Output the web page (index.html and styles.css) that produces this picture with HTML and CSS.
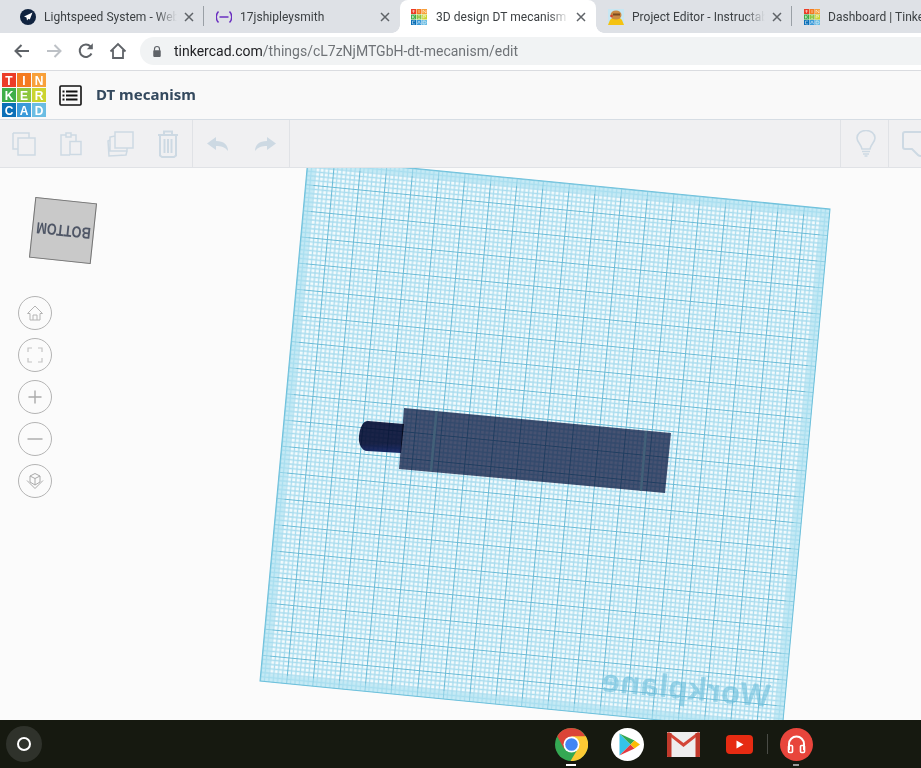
FILE: index.html
```html
<!DOCTYPE html>
<html lang="en">
<head>
<meta charset="utf-8">
<title>3D design DT mecanism</title>
<link rel="stylesheet" href="styles.css">
</head>
<body>
<svg class="defs" width="0" height="0">
  <defs>
    <symbol id="tc" viewBox="0 0 16 16">
      <rect x="0" y="0" width="5" height="5" fill="#ec3c28"/><rect x="5.500" y="0" width="5" height="5" fill="#f47a20"/><rect x="11" y="0" width="5" height="5" fill="#f8a03a"/>
      <rect x="0" y="5.500" width="5" height="5" fill="#3fae49"/><rect x="5.500" y="5.500" width="5" height="5" fill="#8dc63f"/><rect x="11" y="5.500" width="5" height="5" fill="#cbd42f"/>
      <rect x="0" y="11" width="5" height="5" fill="#0a6fb7"/><rect x="5.500" y="11" width="5" height="5" fill="#3a9ad9"/><rect x="11" y="11" width="5" height="5" fill="#6bbde3"/>
      <path d="M1 2H4M2.500 1V4M8 1V4M12 4V1L15 4V1M1.500 6.500V9.500M3.800 6.500L1.500 8L3.800 9.500M7 6.800H9M7 9.300H9M12 9.500V6.500H14.500V8H12M4 12H1.500V15H4M6.500 15L8 12L9.500 15M12 12V15H14L15 13.500L14 12Z" fill="none" stroke="#fff" stroke-width=".5"/>
    </symbol>
    <symbol id="close" viewBox="0 0 10 10"><path d="M1 1L9 9M9 1L1 9" stroke="#5f6368" stroke-width="1.500" fill="none"/></symbol>
    <pattern id="grid" patternUnits="userSpaceOnUse" width="10" height="10">
      <rect width="10" height="10" fill="#f4fbfd"/>
      <path d="M1.667 0V10M3.333 0V10M5 0V10M6.667 0V10M8.333 0V10M0 1.667H10M0 3.333H10M0 5H10M0 6.667H10M0 8.333H10" stroke="#a8dcee" stroke-width=".5" fill="none"/>
      <path d="M.2 0V10M0 .2H10" stroke="#68bad6" stroke-width=".4" fill="none"/>
    </pattern>
  </defs>
</svg>

<div class="tabstrip">
  <div class="tab sep">
    <svg class="fav" viewBox="0 0 16 16"><circle cx="8" cy="8" r="8" fill="#10233f"/><path d="M12.500 3.500L4 7.500L6.500 8.500L7 11.500L8.500 9.800L9.800 10.500Z" fill="#fff"/></svg>
    <span class="tab-title">Lightspeed System - Web</span>
    <svg class="tab-x"><use href="#close"/></svg>
  </div>
  <div class="tab">
    <svg class="fav" viewBox="0 0 16 16"><path d="M2.500 2.500C-.5 5.500-.5 10.500 2.500 13.500M13.500 2.500C16.500 5.500 16.500 10.500 13.500 13.500" fill="none" stroke="#6a2fc0" stroke-width="1.500"/><path d="M3.500 8H12.500" stroke="#6a2fc0" stroke-width="1.500"/></svg>
    <span class="tab-title">17jshipleysmith</span>
    <svg class="tab-x"><use href="#close"/></svg>
  </div>
  <div class="tab active">
    <svg class="fav"><use href="#tc"/></svg>
    <span class="tab-title">3D design DT mecanism</span>
    <svg class="tab-x"><use href="#close"/></svg>
  </div>
  <div class="tab sep">
    <svg class="fav" viewBox="0 0 16 16"><rect width="16" height="16" fill="#c7e6f2"/><path d="M0 16L2 11H14L16 16Z" fill="#f5c211"/><path d="M2 11C3 14 13 14 14 11L12 9H4Z" fill="#f5c211"/><ellipse cx="8" cy="6" rx="5.500" ry="4.500" fill="#c98a45"/><rect x="5" y="4.500" width="7" height="2" fill="#7a4a20"/><circle cx="3.500" cy="7" r="1.300" fill="#d04030"/></svg>
    <span class="tab-title">Project Editor - Instructables</span>
    <svg class="tab-x"><use href="#close"/></svg>
  </div>
  <div class="tab">
    <svg class="fav"><use href="#tc"/></svg>
    <span class="tab-title tab-title-last">Dashboard | Tinkercad</span>
  </div>
</div>

<div class="navbar">
  <svg class="nav-ic" viewBox="0 0 20 20"><path d="M17 10H4M9.500 4L3.500 10L9.500 16" fill="none" stroke="#5f6368" stroke-width="2"/></svg>
  <svg class="nav-ic" viewBox="0 0 20 20"><path d="M3 10H16M10.500 4L16.500 10L10.500 16" fill="none" stroke="#bdc1c6" stroke-width="2"/></svg>
  <svg class="nav-ic" viewBox="0 0 20 20"><path d="M15.500 12.500A6.200 6.200 0 1 1 14.500 5.500" fill="none" stroke="#5f6368" stroke-width="2"/><path d="M10.800 8.300H16.800V2.300Z" fill="#5f6368"/></svg>
  <svg class="nav-ic" viewBox="0 0 20 20"><path d="M2.500 10.500L10 3L17.500 10.500M5 9V17H15V9" fill="none" stroke="#5f6368" stroke-width="1.800"/></svg>
  <div class="omnibox">
    <svg class="lock" viewBox="0 0 12 14"><path d="M3 6V4A3 3 0 0 1 9 4V6" fill="none" stroke="#5f6368" stroke-width="1.400"/><rect x="1.500" y="5.500" width="9" height="8" rx="1" fill="#5f6368"/></svg>
    <span class="url"><span class="url-host">tinkercad.com</span>/things/cL7zNjMTGbH-dt-mecanism/edit</span>
  </div>
</div>

<header class="appbar">
  <svg class="logo" viewBox="0 0 44 44">
    <g class="logo-cells">
      <rect x="0" y="0" width="14" height="14" fill="#ec3c28"/><rect x="15" y="0" width="14" height="14" fill="#f47a20"/><rect x="30" y="0" width="14" height="14" fill="#f8a03a"/>
      <rect x="0" y="15" width="14" height="14" fill="#3fae49"/><rect x="15" y="15" width="14" height="14" fill="#8dc63f"/><rect x="30" y="15" width="14" height="14" fill="#cbd42f"/>
      <rect x="0" y="30" width="14" height="14" fill="#0a6fb7"/><rect x="15" y="30" width="14" height="14" fill="#3a9ad9"/><rect x="30" y="30" width="14" height="14" fill="#6bbde3"/>
    </g>
    <g class="logo-text">
      <text x="7" y="11.500">T</text><text x="22" y="11.500">I</text><text x="37" y="11.500">N</text>
      <text x="7" y="26.500">K</text><text x="22" y="26.500">E</text><text x="37" y="26.500">R</text>
      <text x="7" y="41.500">C</text><text x="22" y="41.500">A</text><text x="37" y="41.500">D</text>
    </g>
  </svg>
  <svg class="list-ic" viewBox="0 0 23 21"><rect x="1" y="1" width="21" height="19" rx="1" fill="none" stroke="#111" stroke-width="1.600"/><path d="M7 6.500H18.500M7 10.500H18.500M7 14.500H18.500" stroke="#111" stroke-width="2"/><path d="M3.500 6.500H5.500M3.500 10.500H5.500M3.500 14.500H5.500" stroke="#111" stroke-width="2"/></svg>
  <h1 class="title">DT mecanism</h1>
</header>

<div class="toolbar">
  <div class="tool-group tools-edit">
    <svg class="tool tool-copy" viewBox="0 0 24 24"><path d="M1 1H17V6M6 6H23V23H6ZM1 1V17H6" fill="none" stroke="#cdd9e3" stroke-width="1.500"/></svg>
    <svg class="tool tool-paste" viewBox="0 0 22 24"><path d="M6 3H1V23H10M16 9V3H11M6 3V1H11V3V5H6Z" fill="none" stroke="#cdd9e3" stroke-width="1.500"/><rect x="10" y="9.500" width="11" height="13" fill="none" stroke="#cdd9e3" stroke-width="1.500"/></svg>
    <svg class="tool tool-dup" viewBox="0 0 27 26"><path d="M8 1H26V17H8ZM8 5L3 6V20H20V17M3 9L1 10L2 25L19 24L20 20" fill="none" stroke="#cdd9e3" stroke-width="1.500"/></svg>
    <svg class="tool tool-trash" viewBox="0 0 22 28"><path d="M1 5H21M7 5V1.500H15V5M3 5V25.500L5 27H17L19 25.500V5M7.500 9V23M11 9V23M14.500 9V23" fill="none" stroke="#cdd9e3" stroke-width="2"/></svg>
  </div>
  <div class="tool-group tools-undo">
    <svg class="tool tool-arrow" viewBox="0 0 22 14"><path d="M9 0L0 6.500L9 13V9C14 9 18 10 21 14C21 8 17 4 9 4Z" fill="#cdd9e3"/></svg>
    <svg class="tool tool-arrow" viewBox="0 0 22 14"><path d="M13 0L22 6.500L13 13V9C8 9 4 10 1 14C1 8 5 4 13 4Z" fill="#cdd9e3"/></svg>
  </div>
  <div class="tool-spacer"></div>
  <div class="tool-group tools-bulb">
    <svg class="tool tool-bulb" viewBox="0 0 20 27"><path d="M6 19C5 14 1 12 1 8A9 7.500 0 0 1 19 8C19 12 15 14 14 19Z" fill="none" stroke="#cdd9e3" stroke-width="1.600"/><path d="M6 21.500H14M7 24H13M8.500 26H11.500" stroke="#cdd9e3" stroke-width="1.600"/></svg>
  </div>
  <div class="tools-note">
    <svg class="tool tool-note" viewBox="0 0 30 26"><path d="M30 1H3Q1 1 1 3V16Q1 18 3 18H10L16 24Q17 25 19 25H30" fill="none" stroke="#cdd9e3" stroke-width="2"/></svg>
  </div>
</div>

<main class="canvas">
  <svg class="scene" viewBox="0 168 921 552" width="921" height="552">
    <g transform="matrix(2.61 .255 -.24 2.615 308 158)">
      <rect width="200" height="200" fill="url(#grid)"/>
      <path class="band" d="M1.500 1.500H198.500V198.500H1.500Z"/>
      <rect class="plane-edge" width="200" height="200"/>
    </g>
    <text class="wp-label" transform="matrix(-.995 -.095 -.095 .995 769 707)">Workplane</text>
    <defs>
      <linearGradient id="cyl" x1="0" y1="0" x2="0" y2="1">
        <stop offset="0" stop-color="#1c2448"/><stop offset=".7" stop-color="#1c2448"/><stop offset="1" stop-color="#22306e"/>
      </linearGradient>
    </defs>
    <path class="solid" d="M368 421L404 424L401 453L367 451C362 451 358 444 359 436C360 427 363 421 368 421Z" fill="url(#cyl)"/>
    <path class="solid" d="M404 408L671 433L665 493L399 469Z" fill="#4b5473"/>
    <path class="stripe" d="M436.500 411L431 471M646 431L641 491"/>
  </svg>

  <div class="cube"><span class="cube-label">BOTTOM</span></div>

  <div class="viewtools">
    <button class="vt" aria-label="Home"><svg viewBox="0 0 18 18"><path d="M1.500 9.500L9 2L16.500 9.500H14V16H4V9.500ZM7 16V11H11V16" fill="none" stroke="#b4b4b4" stroke-width="1"/></svg></button>
    <button class="vt" aria-label="Fit"><svg viewBox="0 0 18 18"><path d="M2 6V2H6M12 2H16V6M16 12V16H12M6 16H2V12" fill="none" stroke="#c4c4c4" stroke-width="1.200"/></svg></button>
    <button class="vt" aria-label="Zoom in"><svg viewBox="0 0 18 18"><path d="M9 2.500V15.500M2.500 9H15.500" fill="none" stroke="#aaa" stroke-width="1.400"/></svg></button>
    <button class="vt" aria-label="Zoom out"><svg viewBox="0 0 18 18"><path d="M1.500 9H16.500" fill="none" stroke="#aaa" stroke-width="1.400"/></svg></button>
    <button class="vt" aria-label="Perspective"><svg viewBox="0 0 18 18"><path d="M9 1.500L14 4V10L9 13L4 10V4ZM4 4L9 6.500L14 4M9 6.500V13M1 8.500L9 16.500L17 8.500" fill="none" stroke="#aaa" stroke-width="1"/></svg></button>
  </div>
</main>

<footer class="shelf">
  <div class="launcher"><span class="launcher-ring"></span></div>
  <div class="dock">
    <div class="app on">
      <svg viewBox="0 0 33 33">
        <circle cx="16.500" cy="16.500" r="16.500" fill="#34a853"/>
        <path d="M16.500 0A16.500 16.500 0 0 0 2.200 8.250L9 20.500L16.500 9H30.800A16.500 16.500 0 0 0 16.500 0Z" fill="#db4437"/>
        <path d="M30.800 8.250H16.500L23 20.500L15.500 33A16.500 16.500 0 0 0 30.800 8.250Z" fill="#fcc934"/>
        <circle cx="16.500" cy="16.500" r="8" fill="#fff"/><circle cx="16.500" cy="16.500" r="6.300" fill="#4285f4"/>
      </svg>
    </div>
    <div class="app">
      <svg viewBox="0 0 33 33">
        <circle cx="16.500" cy="16.500" r="16.500" fill="#fff"/>
        <path d="M8.500 5.500V27.500L19.500 16.500Z" fill="#35c4e8"/>
        <path d="M8.500 5.500L19.500 16.500L23.500 12.500Z" fill="#34a853"/><path d="M8.500 27.500L19.500 16.500L23.500 20.500Z" fill="#e5393f"/>
        <path d="M23.500 12.500L29 16.500L23.500 20.500L19.500 16.500Z" fill="#fbbc04"/>
      </svg>
    </div>
    <div class="app">
      <svg viewBox="0 0 33 33">
        <rect x="0" y="4" width="33" height="25" rx="1" fill="#eeeeee"/>
        <path d="M0 6L16.500 19L33 6V5L31 4L16.500 15L2 4L0 5Z" fill="#d44638"/>
        <path d="M0 5H4.500V29H1C.4 29 0 28.600 0 28ZM33 5H28.500V29H32C32.600 29 33 28.600 33 28Z" fill="#c0392b"/>
      </svg>
    </div>
    <div class="app">
      <svg viewBox="0 0 33 33"><rect x="3" y="7" width="27" height="19" rx="4" fill="#e62b12"/><path d="M13.500 12.500V20.500L20.500 16.500Z" fill="#fff"/></svg>
    </div>
    <span class="dock-sep"></span>
    <div class="app on-dim">
      <svg viewBox="0 0 33 33"><circle cx="16.500" cy="16.500" r="16.500" fill="#e8453c"/><path d="M9 22V16A7.500 7.500 0 0 1 24 16V22" fill="none" stroke="#fff" stroke-width="2"/><rect x="8.500" y="17.500" width="4" height="7" rx="1" fill="none" stroke="#fff" stroke-width="1.600"/><rect x="20.500" y="17.500" width="4" height="7" rx="1" fill="none" stroke="#fff" stroke-width="1.600"/></svg>
    </div>
  </div>
</footer>
</body>
</html>
```
FILE: styles.css
```css
* { box-sizing: border-box; }
html, body { margin: 0; padding: 0; }
body {
  width: 921px;
  height: 768px;
  overflow: hidden;
  display: flex;
  flex-direction: column;
  font-family: Roboto, "Liberation Sans", sans-serif;
  background: #fbfbfb;
}
.defs { position: absolute; }

/* browser tabs */
.tabstrip {
  flex: none;
  height: 33px;
  padding-left: 8px;
  display: flex;
  background: #dee1e6;
  white-space: nowrap;
  overflow: hidden;
}
.tab {
  flex: none;
  position: relative;
  width: 196px;
  height: 33px;
  padding-left: 12px;
  display: flex;
  align-items: center;
  color: #3c4043;
  font-size: 12px;
}
.tab.sep::after {
  content: "";
  position: absolute;
  right: 0;
  top: 6px;
  width: 1px;
  height: 20px;
  background: #9aa0a6;
}
.tab.active {
  background: #fff;
  border-radius: 8px 8px 0 0;
  padding-left: 11px;
}
.tab.active::before,
.tab.active::after {
  content: "";
  position: absolute;
  bottom: 0;
  width: 8px;
  height: 8px;
}
.tab.active::before {
  left: -8px;
  background: radial-gradient(circle at 0 0, transparent 7.500px, #fff 8px);
}
.tab.active::after {
  right: -8px;
  background: radial-gradient(circle at 100% 0, transparent 7.500px, #fff 8px);
}
.fav { flex: none; width: 16px; height: 16px; }
.tab-title {
  flex: none;
  width: 137px;
  margin-left: 8px;
  overflow: hidden;
  letter-spacing: .03px;
  -webkit-mask-image: linear-gradient(to right, #000 112px, transparent 133px);
  mask-image: linear-gradient(to right, #000 112px, transparent 133px);
}
.tab-title-last {
  -webkit-mask-image: none;
  mask-image: none;
}
.tab-x { flex: none; width: 10px; height: 10px; margin-left: 3px; }
.tab.active .tab-title { margin-left: 9px; }

/* address bar */
.navbar {
  flex: none;
  height: 38px;
  padding: 4px 0 5px 12px;
  display: flex;
  align-items: center;
  background: #fff;
  border-bottom: 1px solid #dadce0;
}
.nav-ic { flex: none; width: 20px; height: 20px; margin-right: 12px; }
.omnibox {
  flex: 1;
  height: 28px;
  padding-left: 12px;
  display: flex;
  align-items: center;
  gap: 12px;
  background: #f1f3f4;
  border-radius: 14px 0 0 14px;
  font-size: 14px;
  color: #6f7377;
}
.lock { flex: none; width: 10px; height: 13px; }
.url-host { color: #202124; }

/* tinkercad header */
.appbar {
  flex: none;
  height: 49px;
  padding-left: 2px;
  display: flex;
  align-items: center;
  background: #f9f9f9;
  border-bottom: 1px solid #d6dde4;
}
.logo { flex: none; width: 44px; height: 44px; }
.logo-text text {
  font: 700 12px "Liberation Sans", sans-serif;
  fill: #fff;
  text-anchor: middle;
}
.list-ic { flex: none; width: 23px; height: 21px; margin-left: 13px; }
.title {
  margin: 0 0 2px 14px;
  font: 700 15px "Noto Sans", "Open Sans", sans-serif;
  color: #34495e;
}

/* toolbar */
.toolbar {
  flex: none;
  height: 48px;
  display: flex;
  background: #f0f0f2;
  border-bottom: 1px solid #e0e2e6;
}
.tool-group {
  flex: none;
  display: flex;
  align-items: center;
  border-right: 1px solid #e0e2e6;
}
.tool { flex: none; display: block; }
.tools-edit { width: 193px; padding-left: 12px; }
.tool-copy { width: 24px; height: 24px; }
.tool-paste { width: 22px; height: 24px; margin-left: 24px; }
.tool-dup { width: 27px; height: 26px; margin-left: 25px; }
.tool-trash { width: 22px; height: 28px; margin-left: 23px; }
.tools-undo { width: 97px; padding-left: 14px; gap: 25px; }
.tool-arrow { width: 22px; height: 14px; }
.tool-spacer { flex: 1; }
.tools-bulb { width: 49px; padding-left: 15px; border-left: 1px solid #e0e2e6; }
.tool-bulb { width: 20px; height: 27px; }
.tools-note { flex: none; width: 32px; padding: 11px 0 0 13px; overflow: hidden; }
.tool-note { width: 30px; height: 26px; }

/* canvas */
.canvas {
  flex: 1;
  position: relative;
  min-height: 0;
  overflow: hidden;
  background: #fbfbfb;
}
.scene { position: absolute; inset: 0; display: block; }
.band { fill: none; stroke: #a8dff0; stroke-width: 3; opacity: .6; }
.plane-edge { fill: none; stroke: #6fc1dc; stroke-width: .4; }
.wp-label {
  font: 700 31px "Open Sans", sans-serif;
  fill: #6dbfdc;
  opacity: .6;
}
.solid { mix-blend-mode: multiply; }
.stripe { fill: none; stroke: #426078; stroke-width: 2.500; }
.cube {
  position: absolute;
  left: 32px;
  top: 32px;
  width: 62px;
  height: 61px;
  display: flex;
  align-items: center;
  justify-content: center;
  background: #c9c9c9;
  border: 1.500px solid #747474;
  transform: rotate(186deg);
}
.cube-label {
  font: 700 16px "Liberation Sans", sans-serif;
  color: #4f5666;
  transform: scaleX(.79);
}
.viewtools {
  position: absolute;
  left: 18px;
  top: 128px;
  display: flex;
  flex-direction: column;
  gap: 8px;
}
.vt {
  width: 34px;
  height: 34px;
  padding: 0;
  display: flex;
  align-items: center;
  justify-content: center;
  background: #fbfbfb;
  border: 1px solid #b4b4b4;
  border-radius: 50%;
}
.vt svg { width: 18px; height: 18px; display: block; }

/* chromeos shelf */
.shelf {
  flex: none;
  height: 48px;
  display: flex;
  align-items: center;
  padding-left: 6px;
  background: #161910;
}
.launcher {
  width: 36px;
  height: 36px;
  display: flex;
  align-items: center;
  justify-content: center;
  border-radius: 50%;
  background: #2f322b;
}
.launcher-ring {
  width: 14px;
  height: 14px;
  border: 2px solid #fff;
  border-radius: 50%;
}
.dock {
  margin-left: 501px;
  display: flex;
  align-items: center;
}
.app {
  position: relative;
  width: 56px;
  height: 48px;
  display: flex;
  align-items: center;
  justify-content: center;
}
.app svg { width: 33px; height: 33px; display: block; }
.app.on::after,
.app.on-dim::after {
  content: "";
  position: absolute;
  left: 23px;
  bottom: 2px;
  width: 10px;
  height: 2px;
  background: #fff;
}
.app.on-dim::after { background: #9a9a9a; left: 25px; width: 6px; }
.dock-sep {
  width: 1px;
  height: 20px;
  background: #4a4c46;
}
```
